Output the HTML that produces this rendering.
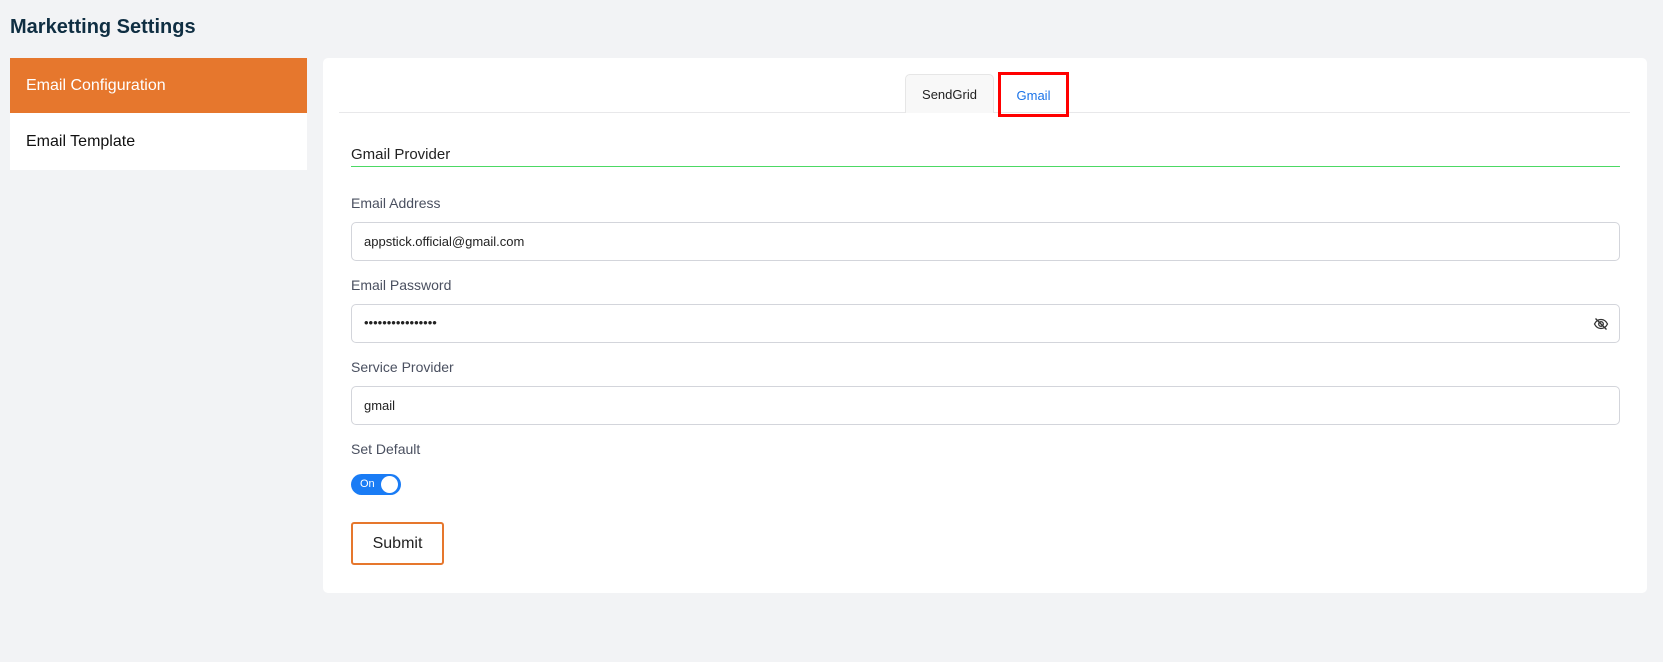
<!DOCTYPE html>
<html><head><meta charset="utf-8"><style>
*{box-sizing:border-box;margin:0;padding:0}
body{width:1663px;height:662px;background:#f2f3f5;font-family:"Liberation Sans",sans-serif;position:relative;overflow:hidden}
.a{position:absolute}
h1{position:absolute;left:10px;top:16px;font-size:20px;font-weight:bold;color:#0f2e42}
.side1{left:10px;top:58px;width:297px;height:55px;background:#e6772d;color:#fff;font-size:16px;padding:19px 0 0 16px}
.side2{left:10px;top:113px;width:297px;height:57px;background:#fff;color:#111;font-size:16px;padding:20px 0 0 16px}
.card{left:323px;top:58px;width:1324px;height:535px;background:#fff;border-radius:5px}
.tabline{left:339px;top:112px;width:1291px;height:1px;background:#e8e8ea}
.tab1{left:905px;top:74px;width:89px;height:39px;background:#f8f8f8;border:1px solid #e6e6e6;border-bottom:none;border-radius:5px 5px 0 0;font-size:13px;color:#222;text-align:center;padding-top:12px}
.tab2{left:998px;top:72px;width:71px;height:45px;border:3px solid #f00;font-size:13px;color:#1a73e8;text-align:center;padding-top:13px}
.lbl{left:351px;font-size:14px;color:#4a5060}
.inp{left:351px;width:1269px;height:39px;border:1px solid #d3d5db;border-radius:5px;font-size:13px;color:#222;padding:11px 0 0 12px}
</style></head><body>
<h1>Marketting Settings</h1>
<div class="a side1">Email Configuration</div>
<div class="a side2">Email Template</div>
<div class="a card"></div>
<div class="a tabline"></div>
<div class="a tab1">SendGrid</div>
<div class="a tab2">Gmail</div>
<div class="a" style="left:351px;top:146px;font-size:15px;color:#222">Gmail Provider</div>
<div class="a" style="left:351px;top:166px;width:1269px;height:1px;background:#4cd964"></div>
<div class="a lbl" style="top:195px">Email Address</div>
<div class="a inp" style="top:222px">appstick.official@gmail.com</div>
<div class="a lbl" style="top:277px">Email Password</div>
<div class="a inp" style="top:304px;letter-spacing:0px;font-size:13px;padding-top:10px">&bull;&bull;&bull;&bull;&bull;&bull;&bull;&bull;&bull;&bull;&bull;&bull;&bull;&bull;&bull;&bull;</div>
<svg class="a" style="left:1593px;top:316px" width="16" height="16" viewBox="0 0 16 16" fill="none" stroke="#333" stroke-width="1.3"><path d="M1.5 8C3 5 5.5 3.5 8 3.5S13 5 14.5 8C13 11 10.5 12.5 8 12.5S3 11 1.5 8Z"/><circle cx="8" cy="8" r="2.3"/><path d="M2.5 2.5L13.5 13.5"/></svg>
<div class="a lbl" style="top:359px">Service Provider</div>
<div class="a inp" style="top:386px">gmail</div>
<div class="a lbl" style="top:441px">Set Default</div>
<div class="a" style="left:351px;top:474px;width:50px;height:21px;border-radius:11px;background:#1a7cf5"><span class="a" style="left:9px;top:4px;font-size:11px;color:#fff">On</span><span class="a" style="left:30px;top:2px;width:17px;height:17px;border-radius:50%;background:#fff"></span></div>
<div class="a" style="left:351px;top:522px;width:93px;height:43px;border:2px solid #e6772d;border-radius:3px;font-size:16px;color:#222;text-align:center;padding-top:11px">Submit</div>
</body></html>
